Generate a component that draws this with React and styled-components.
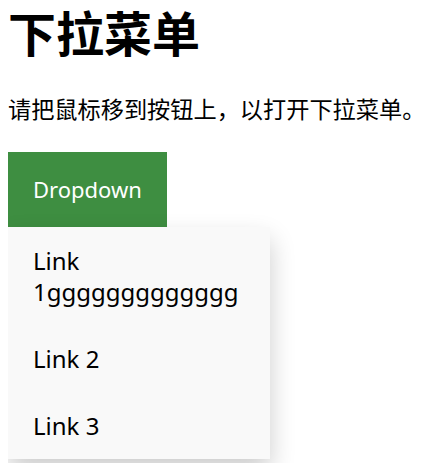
import React from 'react'
import styled, { createGlobalStyle } from 'styled-components'

const GlobalStyle = createGlobalStyle`
  body {
    margin: 3px 8px 8px;
    min-height: 460px;
    background: #ffffff;
    color: #000000;
    font-family: "Noto Sans", "Noto Sans CJK SC", sans-serif;
    font-size: 24px;
  }
`

const Title = styled.h1`
  margin: 0 0 33px;
  font-size: 48px;
  line-height: 56px;
  font-weight: 700;
  font-family: "Noto Sans CJK SC", sans-serif;
`

const Intro = styled.p`
  margin: 0 0 28px;
  font-size: 23.2px;
  line-height: 32px;
  white-space: nowrap;
  font-family: "Noto Sans CJK SC", sans-serif;
`

const Dropdown = styled.div`
  display: flex;
  flex-direction: column;
  align-items: flex-start;
`

const DropButton = styled.button`
  display: block;
  border: none;
  margin: 0;
  padding: 24px 25px;
  background: #3e8e41;
  color: #ffffff;
  font-family: "Noto Sans", sans-serif;
  font-size: 22px;
  line-height: 27px;
  cursor: pointer;
`

const Menu = styled.div`
  width: min-content;
  min-width: 262px;
  background: #f9f9f9;
  box-shadow: 0 12px 24px 0 rgba(0, 0, 0, 0.2);
`

const MenuLink = styled.a`
  display: block;
  padding: 18px 25px;
  color: #000000;
  text-decoration: none;
  font-size: 24px;
  line-height: 31px;
`

const App = () => (
  <>
    <GlobalStyle />
    <Title>下拉菜单</Title>
    <Intro>请把鼠标移到按钮上，以打开下拉菜单。</Intro>
    <Dropdown>
      <DropButton>Dropdown</DropButton>
      <Menu>
        <MenuLink href="#">Link 1ggggggggggggg</MenuLink>
        <MenuLink href="#">Link 2</MenuLink>
        <MenuLink href="#">Link 3</MenuLink>
      </Menu>
    </Dropdown>
  </>
)

export default App
